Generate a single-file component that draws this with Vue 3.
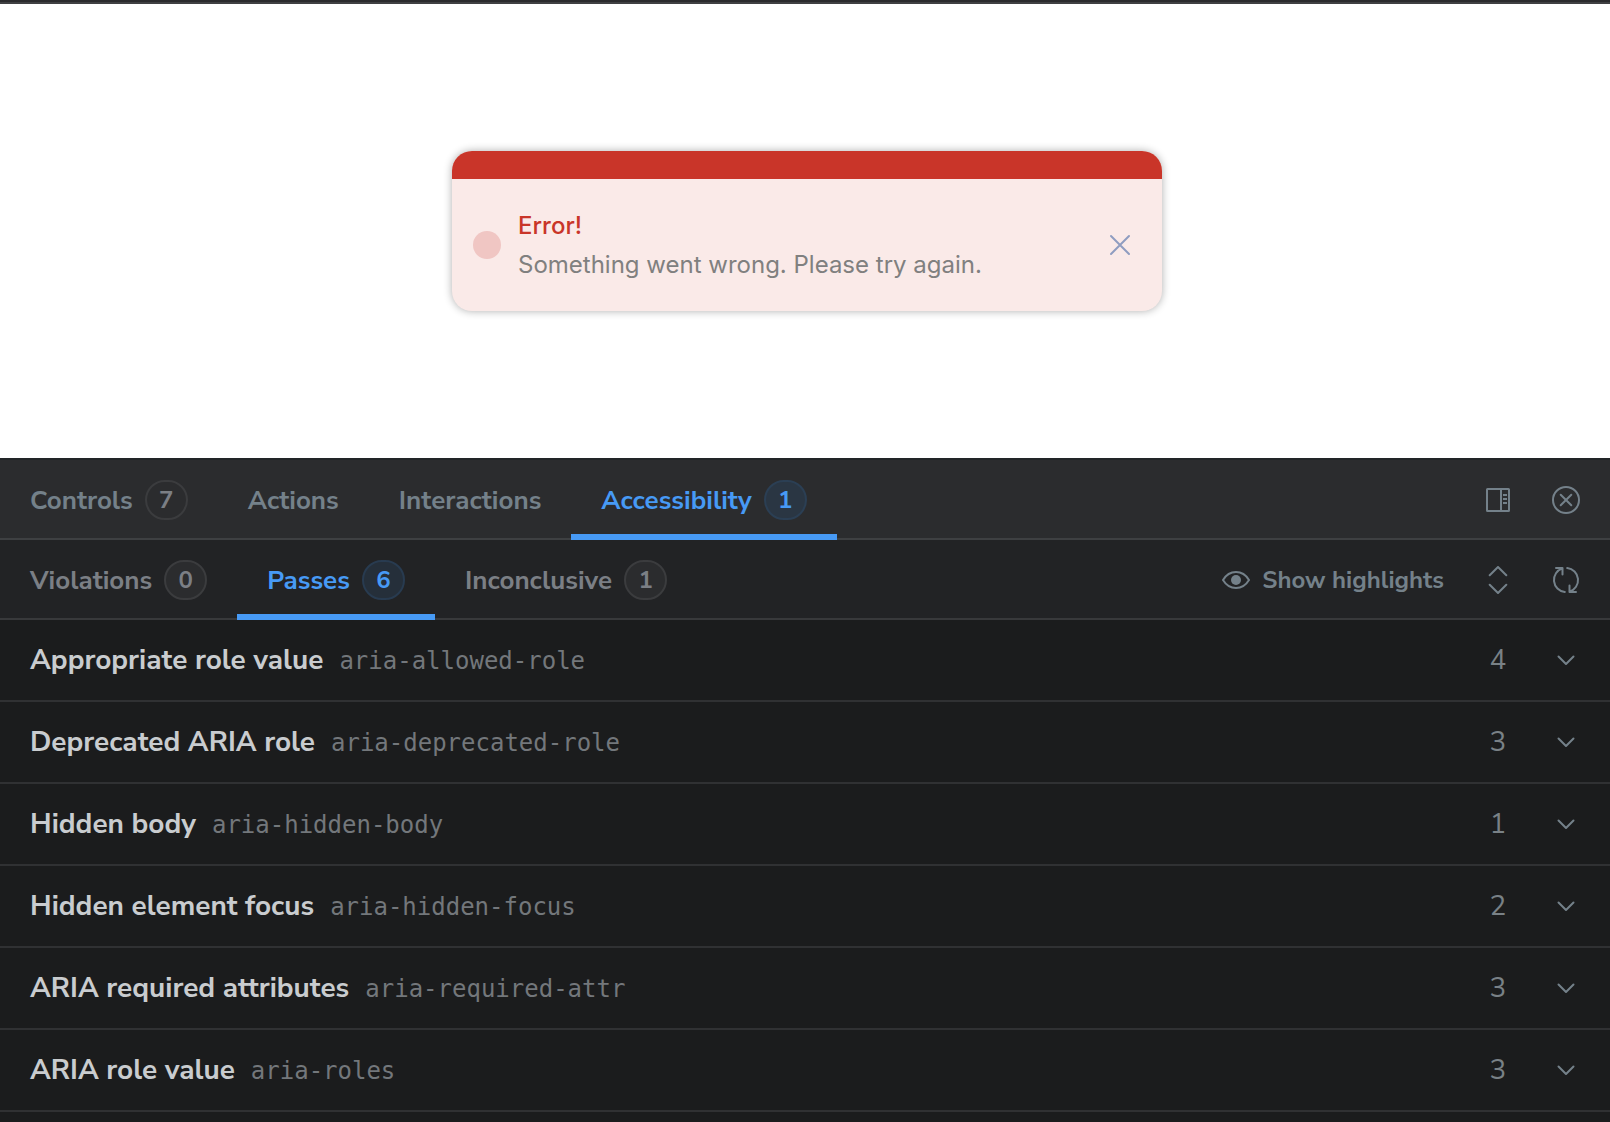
<template>
  <div class="page">
    <main class="stage">
      <div v-if="alertOpen" class="alert" role="alert">
        <div class="alert-bar"></div>
        <div class="alert-body">
          <span class="alert-dot"></span>
          <div class="alert-text">
            <strong>Error!</strong>
            <p>Something went wrong. Please try again.</p>
          </div>
          <button class="alert-close" aria-label="Close" @click="alertOpen = false">
            <svg width="22" height="22" viewBox="0 0 22 22">
              <path d="M2 2L20 20M20 2L2 20" />
            </svg>
          </button>
        </div>
      </div>
    </main>

    <section class="panel">
      <div class="bar addon-bar">
        <div class="tabs" role="tablist">
          <button
            v-for="tab in addonTabs"
            :key="tab.name"
            class="tab"
            :class="{ active: tab.name === activeAddon }"
            role="tab"
            :aria-selected="tab.name === activeAddon"
            @click="activeAddon = tab.name"
          >
            {{ tab.name }}
            <span v-if="tab.count !== undefined" class="badge">{{ tab.count }}</span>
          </button>
        </div>
        <div class="tools">
          <button class="tool" aria-label="Change addon orientation">
            <svg class="icon" viewBox="0 0 28 28">
              <rect x="3" y="3" width="22" height="22" rx="0.5" />
              <path class="flat" d="M17 3V25M19 9H23M19 13H23M19 17H23" />
            </svg>
          </button>
          <button class="tool" aria-label="Hide addons">
            <svg class="icon" viewBox="0 0 28 28">
              <circle cx="14" cy="14" r="13" />
              <path d="M8.7 8.7L19.3 19.3M19.3 8.7L8.7 19.3" />
            </svg>
          </button>
        </div>
      </div>

      <div class="bar result-bar">
        <div class="tabs" role="tablist">
          <button
            v-for="tab in resultTabs"
            :key="tab.name"
            class="tab"
            :class="{ active: tab.name === activeResult }"
            role="tab"
            :aria-selected="tab.name === activeResult"
            @click="activeResult = tab.name"
          >
            {{ tab.name }}
            <span class="badge">{{ tab.count }}</span>
          </button>
        </div>
        <div class="tools">
          <button class="tool highlights">
            <svg class="icon" viewBox="0 0 28 28">
              <path d="M1 14C4 9 8.5 6 14 6S24 9 27 14C24 19 19.5 22 14 22S4 19 1 14Z" />
              <circle class="solid" cx="14" cy="14" r="5" />
            </svg>
            Show highlights
          </button>
          <button class="tool" aria-label="Expand all">
            <svg class="icon" viewBox="0 0 28 28">
              <path d="M5.7 9.3L14 1L22.3 9.3M5.7 18.7L14 27L22.3 18.7" />
            </svg>
          </button>
          <button class="tool" aria-label="Rerun accessibility scan">
            <svg class="icon" viewBox="0 0 28 28">
              <path d="M4 2H10.5V8.5M10.5 2.4A12.1 12.1 0 0 0 12.8 26" />
              <path d="M24 26H17.5V19.5M17.5 25.6A12.1 12.1 0 0 0 15.2 2" />
            </svg>
          </button>
        </div>
      </div>

      <ul class="rules">
        <li v-for="rule in rules" :key="rule.id">
          <button class="rule">
            <span class="rule-title">{{ rule.title }}</span>
            <code>{{ rule.id }}</code>
            <span class="rule-count">{{ rule.count }}</span>
            <span class="rule-arrow">
              <svg class="icon" viewBox="0 0 28 28">
                <path d="M6.5 10.5L14 18L21.5 10.5" />
              </svg>
            </span>
          </button>
        </li>
      </ul>
    </section>
  </div>
</template>

<script setup>
import { ref } from "vue";

const alertOpen = ref(true);
const activeAddon = ref("Accessibility");
const activeResult = ref("Passes");

const addonTabs = [
  { name: "Controls", count: 7 },
  { name: "Actions" },
  { name: "Interactions" },
  { name: "Accessibility", count: 1 },
];

const resultTabs = [
  { name: "Violations", count: 0 },
  { name: "Passes", count: 6 },
  { name: "Inconclusive", count: 1 },
];

const rules = [
  { title: "Appropriate role value", id: "aria-allowed-role", count: 4 },
  { title: "Deprecated ARIA role", id: "aria-deprecated-role", count: 3 },
  { title: "Hidden body", id: "aria-hidden-body", count: 1 },
  { title: "Hidden element focus", id: "aria-hidden-focus", count: 2 },
  { title: "ARIA required attributes", id: "aria-required-attr", count: 3 },
  { title: "ARIA role value", id: "aria-roles", count: 3 },
];
</script>

<style>
body {
  margin: 0;
  background: #1b1c1d;
}
</style>

<style scoped>
.page {
  display: flex;
  flex-direction: column;
  height: 100vh;
  overflow: hidden;
  box-sizing: border-box;
  border-top: 2px solid #2a2b2d;
  font-family: "Nunito Sans", Lato, sans-serif;
}

button {
  margin: 0;
  padding: 0;
  border: none;
  background: none;
  color: inherit;
  font: inherit;
  cursor: pointer;
}

svg {
  display: block;
  fill: none;
  stroke: currentColor;
  stroke-width: 2;
  stroke-linecap: round;
  stroke-linejoin: round;
}

/* Story */
.stage {
  display: flex;
  justify-content: center;
  flex-shrink: 0;
  padding: 147px 20px 147px 24px;
  border-top: 2px solid #3f4042;
  background: #fff;
  font-family: Inter, sans-serif;
}

.alert {
  width: 100%;
  max-width: 710px;
  border-radius: 20px;
  overflow: hidden;
  background: #faeae8;
  box-shadow: 0 0 8px rgba(0, 0, 0, 0.32);
}

.alert-bar {
  height: 28px;
  background: #c93529;
}

.alert-body {
  display: flex;
  align-items: center;
  padding: 27px 31px 27px 21px;
}

.alert-dot {
  width: 28px;
  height: 28px;
  border-radius: 50%;
  background: #f0c6c3;
}

.alert-text {
  flex: 1;
  margin-left: 17px;
  font-size: 24px;
  line-height: 39px;
  color: #80807f;
}

.alert-text strong {
  display: block;
  font-weight: 500;
  color: #c93529;
}

.alert-text p {
  margin: 0;
}

.alert-close {
  color: #8f9dc0;
}

/* Addon panel */
.panel {
  flex: 1;
  border-top: 2px solid #222528;
  color: #798186;
}

.bar {
  display: flex;
  justify-content: space-between;
  height: 78px;
  border-bottom: 2px solid #3e4042;
}

.addon-bar {
  background: #2b2c2e;
  color: #74818a;
}

.result-bar {
  background: #222325;
  border-color: #38393b;
  color: #7b7f85;
}

/* The tab underline covers the bar's own border */
.tabs,
.tools {
  display: flex;
  margin-bottom: -2px;
}

.tab {
  display: flex;
  align-items: center;
  gap: 12px;
  padding: 0 30px;
  border-top: 6px solid transparent;
  border-bottom: 6px solid transparent;
  font-size: 26px;
  font-weight: 700;
}

.tab.active {
  border-bottom-color: #479af5;
  color: #479af5;
}

.badge {
  box-sizing: border-box;
  min-width: 43px;
  height: 40px;
  border: 2px solid #3b3c3e;
  border-radius: 20px;
  background: #2b2c2e;
  color: #7b7f85;
  font-size: 24px;
  line-height: 36px;
  text-align: center;
}

.active .badge {
  border-color: #2b3f54;
  background: #2a3643;
  color: #479af5;
}

.result-bar .active .badge {
  border-color: #283b50;
  background: #252f3a;
}

.tools {
  align-items: center;
  gap: 12px;
  padding-right: 16px;
  color: #74818a;
}

.tool {
  display: flex;
  align-items: center;
  justify-content: center;
  width: 56px;
  height: 56px;
}

.highlights {
  gap: 12px;
  width: auto;
  padding: 0 14px;
  font-size: 24px;
  font-weight: 700;
}

.icon {
  width: 28px;
  height: 28px;
}

.flat {
  stroke-linecap: butt;
}

.solid {
  fill: currentColor;
  stroke: none;
}

.rules {
  margin: 0;
  padding: 0;
  list-style: none;
  background: #1b1c1d;
}

.rule {
  display: flex;
  align-items: center;
  width: 100%;
  height: 82px;
  padding: 0 16px 0 30px;
  border-bottom: 2px solid #303133;
  font-size: 28px;
  text-align: left;
}

.rule-title {
  color: #c9cccf;
  font-weight: 700;
}

.rule code {
  margin-left: 16px;
  padding-top: 2px;
  color: #73777b;
  font-family: Menlo, "DejaVu Sans Mono", monospace;
  font-size: 24px;
}

.rule-count {
  width: 56px;
  margin-left: auto;
  text-align: center;
}

.rule-arrow {
  display: flex;
  justify-content: center;
  width: 56px;
  margin-left: 12px;
  color: #74818a;
}
</style>
